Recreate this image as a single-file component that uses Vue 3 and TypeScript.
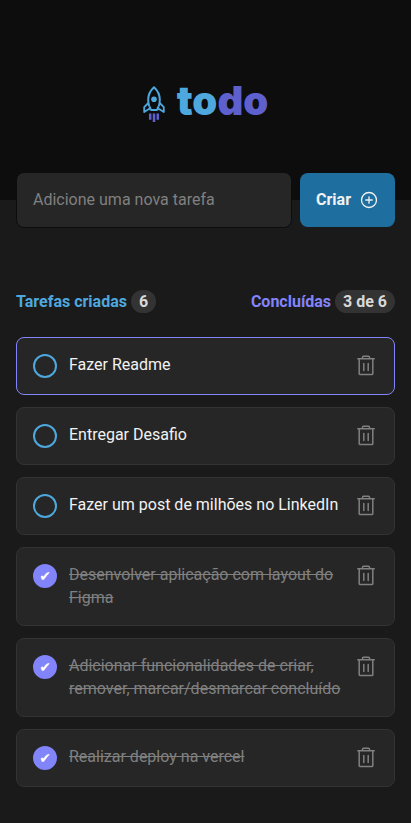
<script setup lang="ts">
import { computed, ref } from 'vue'

interface Task {
  id: number
  title: string
  done: boolean
}

const tasks = ref<Task[]>([
  { id: 1, title: 'Fazer Readme', done: false },
  { id: 2, title: 'Entregar Desafio', done: false },
  { id: 3, title: 'Fazer um post de milhões no LinkedIn', done: false },
  { id: 4, title: 'Desenvolver aplicação com layout do Figma', done: true },
  { id: 5, title: 'Adicionar funcionalidades de criar, remover, marcar/desmarcar concluído', done: true },
  { id: 6, title: 'Realizar deploy na vercel', done: true },
])
const activeId = ref(1)
const draft = ref('')
const doneCount = computed(() => tasks.value.filter((task) => task.done).length)

function addTask() {
  const title = draft.value.trim()
  if (!title) return
  tasks.value.push({ id: Date.now(), title, done: false })
  draft.value = ''
}

function removeTask(id: number) {
  tasks.value = tasks.value.filter((task) => task.id !== id)
}
</script>

<template>
  <div class="page">
    <header class="header">
      <svg class="rocket" viewBox="0 0 22 36" fill="none" aria-hidden="true">
        <path d="M6.300 20.500C5.500 18 5.200 15.500 5.200 13.500 5.200 8.500 7.600 4.300 11 1.200c3.400 3.100 5.800 7.300 5.800 12.300 0 2-.3 4.500-1.100 7" stroke="#4ea8de" stroke-width="2" stroke-linejoin="round" />
        <path d="M5.300 17 1.200 21.200V26l4.300-2.700H6l1-2.300 1 3h6l1-3 1 2.300h.5l4.300 2.700v-4.800L16.700 17" stroke="#4ea8de" stroke-width="1.800" stroke-linejoin="round" />
        <circle cx="11" cy="13.300" r="2.800" fill="#4ea8de" />
        <path d="M7.200 27.500v6.300M11 27.500V36M14.800 27.500v6.300" stroke="#5e60ce" stroke-width="2.500" />
      </svg>
      <h1 class="logo">to<span class="logo-end">do</span></h1>
    </header>

    <main class="content">
      <form class="form" @submit.prevent="addTask">
        <input v-model="draft" class="field" type="text" placeholder="Adicione uma nova tarefa" aria-label="Nova tarefa" />
        <button class="create" type="submit">
          <span class="create-label">Criar</span>
          <svg class="plus" viewBox="0 0 20 20" fill="none" stroke="currentColor" stroke-width="1.300" stroke-linecap="round" aria-hidden="true">
            <circle cx="10" cy="10" r="7.500" />
            <path d="M6.800 10h6.400M10 6.800v6.400" />
          </svg>
        </button>
      </form>

      <div class="summary">
        <p class="created">Tarefas criadas <span class="badge">{{ tasks.length }}</span></p>
        <p class="completed">Concluídas <span class="badge">{{ doneCount }} de {{ tasks.length }}</span></p>
      </div>

      <ul class="list">
        <li v-for="task in tasks" :key="task.id" class="task" :class="{ active: task.id === activeId, done: task.done }">
          <input :id="`task-${task.id}`" v-model="task.done" class="check" type="checkbox" />
          <label class="title" :for="`task-${task.id}`">{{ task.title }}</label>
          <button class="remove" type="button" aria-label="Remover tarefa" @click="removeTask(task.id)">
            <svg class="trash" viewBox="0 0 24 24" fill="none" stroke="currentColor" stroke-width="1.500" stroke-linecap="round" stroke-linejoin="round" aria-hidden="true">
              <path d="M3.800 4.800h16.400M5.200 4.800v15a.6.600 0 0 0 .6.600h12.400a.6.600 0 0 0 .6-.6v-15M8.500 4.500V3.300a1 1 0 0 1 1-1h5a1 1 0 0 1 1 1v1.200M9.800 9.500v7M14.200 9.500v7" />
            </svg>
          </button>
        </li>
      </ul>
    </main>
  </div>
</template>

<style>
body {
  margin: 0;
  background: #1a1a1a;
}
</style>

<style scoped>
.page {
  font-family: Roboto, sans-serif;
  font-size: 16px;
  color: #f2f2f2;
}

.header {
  display: flex;
  align-items: center;
  justify-content: center;
  gap: 12px;
  height: 200px;
  padding-top: 8px;
  box-sizing: border-box;
  background: #0d0d0d;
}

.rocket {
  width: 22px;
  height: 36px;
}

.logo {
  margin: 0 0 6px;
  font-family: Inter, sans-serif;
  font-size: 40px;
  line-height: 48px;
  font-weight: 900;
  color: #4ea8de;
}

.logo-end {
  color: #5e60ce;
}

.content {
  max-width: 736px;
  margin: -28px auto 0;
  padding: 0 16px 36px;
}

.form {
  display: flex;
  align-items: center;
  gap: 8px;
}

.field {
  flex: 1;
  min-width: 0;
  height: 56px;
  box-sizing: border-box;
  padding: 0 16px 2px;
  border: 1px solid #0d0d0d;
  border-radius: 8px;
  background: #262626;
  color: #f2f2f2;
  font: inherit;
}

.field::placeholder {
  color: #808080;
}

.create {
  display: flex;
  align-items: center;
  gap: 8px;
  height: 54px;
  padding: 0 16px;
  border: 0;
  border-radius: 8px;
  background: #1e6f9f;
  color: #f2f2f2;
  font: inherit;
  font-weight: 700;
  cursor: pointer;
}

.create-label {
  padding-bottom: 2px;
}

.plus {
  width: 20px;
  height: 20px;
}

.summary {
  display: flex;
  justify-content: space-between;
  margin: 62px 0 24px;
  font-weight: 700;
}

.summary p {
  display: flex;
  align-items: center;
  gap: 4px;
  margin: 0;
}

.created {
  color: #4ea8de;
}

.completed {
  color: #8284fa;
}

.badge {
  padding: 2px 8px;
  border-radius: 12px;
  background: #333333;
  color: #d9d9d9;
  line-height: 19px;
}

.list {
  display: flex;
  flex-direction: column;
  gap: 12px;
  margin: 0;
  padding: 0;
  list-style: none;
}

.task {
  display: flex;
  align-items: flex-start;
  gap: 12px;
  padding: 15px 16px 16px;
  border: 1px solid #333333;
  border-radius: 8px;
  background: #262626;
}

.task.active {
  border-color: #8284fa;
}

.check {
  display: grid;
  place-items: center;
  flex: none;
  width: 24px;
  height: 24px;
  margin: 1px 0 0;
  box-sizing: border-box;
  appearance: none;
  border: 2px solid #4ea8de;
  border-radius: 50%;
  cursor: pointer;
}

.check:checked {
  border-color: #8284fa;
  background: #8284fa;
}

.check:checked::after {
  content: '✔';
  color: #ffffff;
  font-family: 'DejaVu Sans', sans-serif;
  font-size: 14px;
  line-height: 20px;
}

.title {
  flex: 1;
  line-height: 23px;
}

.done .title {
  color: #808080;
  text-decoration: line-through;
}

.remove {
  flex: none;
  margin: 1px 0 0;
  padding: 0;
  border: 0;
  background: none;
  color: #808080;
  cursor: pointer;
}

.trash {
  display: block;
  width: 24px;
  height: 24px;
}
</style>
